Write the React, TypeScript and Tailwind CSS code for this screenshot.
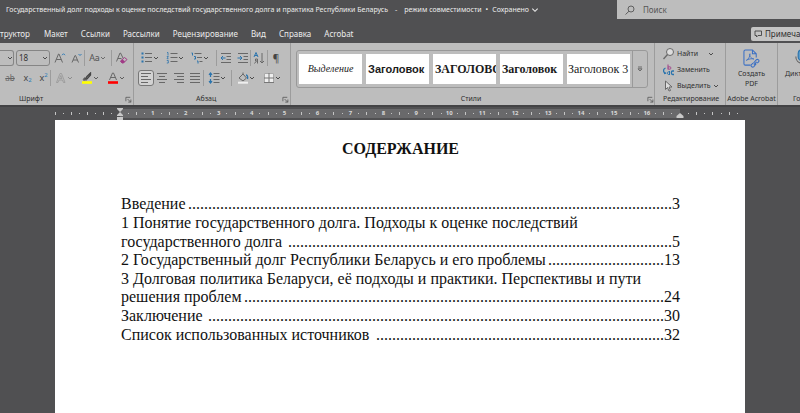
import React from 'react';
import clsx from 'clsx';

const tabs = [
  { label: 'структор', className: 'w-[30px] flex justify-end' },
  { label: 'Макет', className: 'ml-[14px]' },
  { label: 'Ссылки', className: 'ml-[13px]' },
  { label: 'Рассылки', className: 'ml-[13px]' },
  { label: 'Рецензирование', className: 'ml-[13px]' },
  { label: 'Вид', className: 'ml-[13px]' },
  { label: 'Справка', className: 'ml-[13px]' },
  { label: 'Acrobat', className: 'ml-[13px]' },
];

const styleCards = [
  { label: 'Выделение', className: 'justify-center px-[2px] font-["Liberation_Serif",serif] text-[10px] italic' },
  { label: 'Заголовок', className: 'px-[2px] font-["Liberation_Sans",sans-serif] text-[11px] font-bold' },
  { label: 'ЗАГОЛОВОК', className: 'px-[2px] font-["Liberation_Serif",serif] text-[12px] font-bold' },
  { label: 'Заголовок', className: 'px-[2px] font-["Liberation_Serif",serif] text-[12px] font-bold' },
  { label: 'Заголовок 3', className: 'px-px font-["Liberation_Serif",serif] text-[12px]' },
];

const contents = [
  { text: 'Введение', dots: 121, page: '3' },
  { text: '1 Понятие государственного долга. Подходы к оценке последствий' },
  { text: 'государственного долга ', dots: 96, page: '5' },
  { text: '2 Государственный долг Республики Беларусь и его проблемы', dots: 29, page: '13' },
  { text: '3 Долговая политика Беларуси, её подходы и практики. Перспективы и пути' },
  { text: 'решения проблем', dots: 105, page: '24' },
  { text: 'Заключение ', dots: 114, page: '30' },
  { text: 'Список использованных источников ', dots: 72, page: '32' },
];

const Chevron = ({ className }: { className?: string }) => (
  <svg viewBox="0 0 6 6" className={clsx('h-[6px] w-[6px] shrink-0', className)} fill="none" stroke="currentColor" strokeWidth="0.8">
    <path d="M1 2l2 2 2-2" />
  </svg>
);

const Sep = ({ className }: { className?: string }) => (
  <span className={clsx('h-[16px] w-px shrink-0 bg-[#9c9c9c]', className)} />
);

type ToolProps = { label: string; className?: string; children: React.ReactNode };

const Tool = ({ label, className, children }: ToolProps) => (
  <button type="button" aria-label={label} className={clsx('flex h-[16px] shrink-0 items-center justify-center', className)}>
    {children}
  </button>
);

const Icon = ({ children, className }: { children: React.ReactNode; className?: string }) => (
  <svg viewBox="0 0 12 12" className={clsx('h-[12px] w-[12px] shrink-0', className)} fill="none" stroke="#686868" strokeWidth="1">
    {children}
  </svg>
);

const Launcher = ({ label }: { label: string }) => (
  <button type="button" aria-label={label} className="flex h-[8px] w-[8px] shrink-0 items-center justify-center">
    <svg viewBox="0 0 8 8" className="h-[7px] w-[7px]" fill="none" stroke="#555" strokeWidth="0.9">
      <path d="M1 6V1.5h5M3 3.5l3.5 3.5M6.7 4v3h-3" />
    </svg>
  </button>
);

const FontGroup = () => (
  <section aria-label="Шрифт" className="flex w-[134px] shrink-0 flex-col border-r border-[#9c9c9c] pt-[6px]">
    <div className="flex h-[18px] items-center">
      <Tool label="Имя шрифта" className="w-[14px] rounded-r-[3px] border border-l-0 border-[#858585] pl-[6px]">
        <Chevron />
      </Tool>
      <div className="ml-[2px] flex h-[16px] w-[34px] items-center rounded-[3px] border border-[#858585] pr-px">
        <select aria-label="Размер шрифта" defaultValue="18" className="h-full w-[26px] appearance-none bg-transparent pl-[2px] text-[8px] leading-[14px] text-[#333] outline-none">
          <option>14</option>
          <option>16</option>
          <option>18</option>
        </select>
        <Chevron />
      </div>
      <Tool label="Увеличить размер" className="ml-[3px] w-[14px]">
        <Icon>
          <path d="M1 10.5L4.500 2h.5l3.500 8.5M2.200 7.500h5" />
          <path d="M8 3.200l1.500-1.500L11 3.200" stroke="#2f7cb8" />
        </Icon>
      </Tool>
      <Tool label="Уменьшить размер" className="ml-[3px] w-[13px]">
        <Icon>
          <path d="M1 10.500L4 3.500h.5l3 7M2 8h4.500" />
          <path d="M7.500 2L9 3.500 10.500 2" stroke="#2f7cb8" />
        </Icon>
      </Tool>
      <Sep className="ml-px" />
      <Tool label="Регистр" className="ml-[3px] w-[19px] justify-between text-[9px] text-[#555]">
        Аа
        <Chevron />
      </Tool>
      <Sep className="ml-[4px]" />
      <Tool label="Удалить форматирование" className="ml-[3px] w-[13px]">
        <Icon>
          <path d="M.5 9.500L4 1h.5L7 6M2 6.500h3.500" />
          <path d="M4.500 9l4-3.500 2.500 2-3.500 3.500H6z" stroke="#a03a86" />
          <path d="M4.500 9l2-1.700 2.500 2.200L7.500 11H6z" fill="#a03a86" stroke="none" />
        </Icon>
      </Tool>
    </div>
    <div className="mt-[2px] flex h-[18px] items-center text-[9px] text-[#444]">
      <Tool label="Зачеркнутый" className="ml-[4px] w-[12px] text-[8px] text-[#666] line-through">ab</Tool>
      <Tool label="Подстрочный" className="ml-[6px] w-[11px]">
        x<sub className="text-[6px] text-[#2f7cb8]">2</sub>
      </Tool>
      <Tool label="Надстрочный" className="ml-[5px] w-[11px]">
        x<sup className="text-[6px] text-[#2f7cb8]">2</sup>
      </Tool>
      <Sep className="ml-px" />
      <Tool label="Текстовые эффекты" className="ml-[3px] w-[20px] justify-between">
        <Icon className="opacity-50">
          <path d="M1.500 10.500L5 1.500h1.500l3.500 9H8.500L7.500 8H4l-1 2.500zM4.500 6.500h2.500L5.800 3.500z" strokeWidth="0.7" />
        </Icon>
        <Chevron className="opacity-50" />
      </Tool>
      <Tool label="Цвет выделения" className="ml-[6px] w-[20px] justify-between">
        <Icon>
          <path d="M9.500 1L6 4.500 4 7.500l2-.5L9.500 3z" stroke="#444" strokeWidth="1.3" />
          <path d="M3.500 5.500L2 8h4" fill="#555" />
          <path d="M1 10.500h10" stroke="#ffff00" strokeWidth="2.6" />
        </Icon>
        <Chevron />
      </Tool>
      <Tool label="Цвет текста" className="ml-[6px] w-[20px] justify-between">
        <Icon>
          <path d="M2.500 8L5.500 1h1l3 7M3.800 5.500h4.500" />
          <path d="M1 10.500h10" stroke="#ff0000" strokeWidth="2.6" />
        </Icon>
        <Chevron />
      </Tool>
    </div>
    <div className="mt-[7px] flex items-center justify-between pr-px pl-[19px]">
      Шрифт
      <Launcher label="Параметры шрифта" />
    </div>
  </section>
);

const ParagraphGroup = () => (
  <section aria-label="Абзац" className="flex w-[157px] shrink-0 flex-col border-r border-[#9c9c9c] pt-[6px]">
    <div className="flex h-[18px] items-center">
      <Tool label="Маркеры" className="ml-[6px] w-[20px] justify-between">
        <Icon>
          <path d="M4 1.500h7M4 5.500h7M4 9.500h7" />
          <path d="M.5 1.500h2M.5 5.500h2M.5 9.500h2" stroke="#2b74ad" strokeWidth="2" />
        </Icon>
        <Chevron />
      </Tool>
      <Tool label="Нумерация" className="ml-[5px] w-[20px] justify-between">
        <Icon>
          <path d="M4.500 1.500h7M4.500 5.500h7M4.500 9.500h7" />
          <path d="M1 .5h1v3M.8 4.500h1.500L1 6.700h1.500M.8 8.500h1.500V11H.8" stroke="#2b74ad" strokeWidth="0.8" />
        </Icon>
        <Chevron />
      </Tool>
      <Tool label="Многоуровневый список" className="ml-[5px] w-[20px] justify-between">
        <Icon>
          <path d="M3.500 1.500h7M6 5.500h5M8.500 9.500h3" />
          <path d="M.5 1h1v2.500M3 4.500h1.500V7H3M6 9h1v2.500" stroke="#2b74ad" />
        </Icon>
        <Chevron />
      </Tool>
      <Sep className="ml-[6px]" />
      <Tool label="Уменьшить отступ" className="ml-[3px] w-[12px]">
        <Icon>
          <path d="M1 1.500h10M6.500 4.500H11M6.500 7.500H11M1 10.500h10" />
          <path d="M5.500 6H1M3 4L1 6l2 2" stroke="#2b74ad" />
        </Icon>
      </Tool>
      <Tool label="Увеличить отступ" className="ml-[5px] w-[12px]">
        <Icon>
          <path d="M1 1.500h10M6.500 4.500H11M6.500 7.500H11M1 10.500h10" />
          <path d="M.5 6H5M3 4l2 2-2 2" stroke="#2b74ad" />
        </Icon>
      </Tool>
      <Sep className="ml-px" />
      <Tool label="Сортировка" className="ml-[2px] w-[12px]">
        <Icon>
          <path d="M1 5L3 .5 5 5M1.800 3.500h2.500" stroke="#2b74ad" />
          <path d="M4.500 11.500v-4.500H2.500v2h2M3 9.500l-1.500 2M9 1v10M7 9l2 2 2-2" />
        </Icon>
      </Tool>
      <Sep className="ml-[2px]" />
      <Tool label="Знаки абзаца" className="ml-[3px] w-[10px] text-[10px] text-[#444]">¶</Tool>
    </div>
    <div className="mt-[2px] flex h-[18px] items-center">
      <Tool label="По левому краю" className="ml-[4px] w-[16px] rounded-[3px] border border-[#777] bg-[#d2d2d2]">
        <Icon>
          <path d="M1 1.500h10M1 4.500h7M1 7.500h10M1 10.500h7" />
        </Icon>
      </Tool>
      <Tool label="По центру" className="ml-[2px] w-[12px]">
        <Icon>
          <path d="M1 1.500h10M3 4.500h6M1 7.500h10M3 10.500h6" />
        </Icon>
      </Tool>
      <Tool label="По правому краю" className="ml-[5px] w-[12px]">
        <Icon>
          <path d="M1 1.500h10M4 4.500h7M1 7.500h10M4 10.500h7" />
        </Icon>
      </Tool>
      <Tool label="По ширине" className="ml-[4px] w-[12px]">
        <Icon>
          <path d="M1 1.500h10M1 4.500h10M1 7.500h10M1 10.500h10" />
        </Icon>
      </Tool>
      <Sep className="ml-[2px]" />
      <Tool label="Интервал" className="ml-[3px] w-[20px] justify-between">
        <Icon>
          <path d="M5.500 1.500h6M5.500 4.500h6M5.500 7.500h6M5.500 10.500h6" />
          <path d="M2.500 1v4M1 2.800L2.500 1 4 2.800M2.500 7v4M1 9.200L2.500 11 4 9.200" stroke="#2b74ad" strokeWidth="1.2" />
        </Icon>
        <Chevron />
      </Tool>
      <Sep className="ml-[4px]" />
      <Tool label="Заливка" className="ml-[4px] w-[20px] justify-between">
        <Icon>
          <path d="M2 6l4-4 3.500 4-3.500 3zM6 2V.5" />
          <path d="M9 3c1.500 0 2 2 1.500 4" stroke="#2b74ad" strokeWidth="1.3" />
          <path d="M1 10.700h10" stroke="#eee" strokeWidth="2" />
        </Icon>
        <Chevron />
      </Tool>
      <Tool label="Границы" className="ml-[5px] w-[21px] justify-between">
        <Icon>
          <path d="M1.500 1.500h9v9h-9z" fill="#eee" stroke="#aaa" />
          <path d="M6 1v10M1 6h10M1 10.500h10" stroke="#777" />
        </Icon>
        <Chevron />
      </Tool>
    </div>
    <div className="mt-[7px] flex items-center justify-between pr-px pl-[62px]">
      Абзац
      <Launcher label="Параметры абзаца" />
    </div>
  </section>
);

const StylesGroup = () => (
  <section aria-label="Стили" className="flex min-w-0 flex-1 flex-col border-r border-[#9c9c9c] pt-[7px] pl-[5px]">
    <div className="mr-[6px] flex h-[38px] rounded-[3px] border border-[#999]">
      <div className="grid min-w-0 flex-1 grid-cols-5 gap-[4px] px-[2px] py-[3px]">
        {styleCards.map((card, i) => (
          <button
            key={i}
            type="button"
            className={clsx('flex items-center overflow-hidden bg-white whitespace-nowrap text-[#1b1b1b]', card.className)}
          >
            {card.label}
          </button>
        ))}
      </div>
      <button type="button" aria-label="Все стили" className="flex w-[15px] items-center justify-center border-l border-[#999]">
        <svg viewBox="0 0 6 6" className="h-[6px] w-[6px]" fill="none" stroke="#555" strokeWidth="0.8">
          <path d="M1 1h4M1 2.8h4L3 5z" />
        </svg>
      </button>
    </div>
    <div className="mt-[6px] flex items-center">
      <span className="flex-1 text-center">Стили</span>
      <Launcher label="Область стилей" />
    </div>
  </section>
);

const EditGroup = () => (
  <section aria-label="Редактирование" className="flex w-[71px] shrink-0 flex-col border-r border-[#9c9c9c] pt-[3px] pl-[8px]">
    <button type="button" className="flex h-[16px] items-center gap-[2px]">
      <Icon>
        <circle cx="7" cy="4" r="3.500" fill="#ddd" />
        <path d="M4.500 6.500L.5 11" strokeWidth="1.3" />
      </Icon>
      Найти
      <Chevron className="ml-[8px]" />
    </button>
    <button type="button" className="flex h-[16px] items-center gap-[2px]">
      <Icon>
        <path d="M5 .5v5M5 3.500c0-1 3-1 3 .5S5 5.500 5 4.500" stroke="#a03a86" />
        <path d="M2.500 4C0 5 0 8 2 9M1 9.500l2-.5M11 7H9.500C8 7 8 10.500 9.500 10.500H11" stroke="#2b74ad" strokeWidth="1.3" />
        <path d="M6.500 7v4M6.500 8c-3-1-3 3 0 2.500" stroke="#2b74ad" />
      </Icon>
      Заменить
    </button>
    <button type="button" className="flex h-[16px] items-center gap-[2px]">
      <Icon>
        <path d="M2.500 1v8.500l2-2L6 11l1.500-.5L6 7h3z" fill="#ddd" />
      </Icon>
      Выделить
      <Chevron />
    </button>
    <span>Редактирование</span>
  </section>
);

const AcrobatGroup = () => (
  <section aria-label="Adobe Acrobat" className="flex w-[52px] shrink-0 flex-col items-center border-r border-[#9c9c9c] pt-[6px] whitespace-nowrap">
    <button type="button" className="flex flex-col items-center">
      <svg viewBox="0 0 18 20" className="h-[19px] w-[17px]" fill="none" stroke="#3a6fc4" strokeWidth="1.1">
        <path d="M8 17H2.500Q1 17 1 15.500V2.500Q1 1 2.500 1H10l4 4v4M10 1v4h4" />
        <path d="M3.500 12c2-1 4-4 4-7-1.500 0 0 5 4 5.500-2-.7-6 0-8 1.500z" strokeWidth="0.9" />
        <path d="M11 15l3-3.500c1.500-1.500 4 .5 2.500 2L15 15M14 15.500l-2.500 3c-1.500 1.500-4-.5-2.500-2l1.500-1.500M11.500 16.500l3-3" />
      </svg>
      <span className="mt-px leading-[10px]">Создать</span>
      <span className="leading-[10px]">PDF</span>
    </button>
    <span className="mt-[5px]">Adobe Acrobat</span>
  </section>
);

const VoiceGroup = () => (
  <section aria-label="Голос" className="flex w-[22px] shrink-0 flex-col overflow-hidden pt-[6px] whitespace-nowrap">
    <button type="button" className="flex flex-col pl-[7px]">
      <svg viewBox="0 0 16 20" className="ml-[9px] h-[19px] w-[16px] shrink-0" fill="none" stroke="#666" strokeWidth="1.2">
        <rect x="4" y="1" width="7" height="11" rx="3.5" fill="#5b9bc9" stroke="#2b74ad" />
        <path d="M1.500 8c0 9 12 9 12 0M7.500 15v4" />
      </svg>
      <span className="mt-px leading-[10px]">Диктофон</span>
    </button>
    <span className="mt-[15px] pl-[15px]">Голос</span>
  </section>
);

const Tick = ({ index, numbered }: { index: number; numbered?: boolean }) => (
  <span className="flex h-full min-w-0 flex-1 items-center justify-center">
    {numbered && index % 4 === 0 ? (
      <span>{index / 4}</span>
    ) : (
      <span className={clsx('w-px bg-[#c4c4c4]', index % 2 ? 'h-px' : 'h-[3px]')} />
    )}
  </span>
);

const Ruler = () => (
  <div className="flex h-[15px] shrink-0 items-center justify-center border-t-2 border-[#434345]">
    <div className="flex h-[9px] w-full max-w-[698px] text-[6px] leading-[9px] font-bold text-[#d8d8d8]">
      <div className="flex w-[69px] pr-[4px]">
        {Array.from({ length: 8 }, (_, i) => <Tick key={i} index={i} />)}
      </div>
      <div className="relative flex min-w-0 flex-1 bg-[#69696b] px-[4px]">
        {Array.from({ length: 67 }, (_, i) => <Tick key={i} index={i + 1} numbered />)}
        <svg viewBox="0 0 8 14" className="absolute -top-[2px] -left-[4px] h-[14px] w-[8px]" fill="#c8c8c8">
          <path d="M1 1h6v1L4 5 1 2zM4 5l3 3v1H1V8zM1 10h6v3H1z" />
        </svg>
        <svg viewBox="0 0 8 5" className="absolute top-[4px] -right-[4px] h-[5px] w-[8px]" fill="#c8c8c8">
          <path d="M4 0l3.500 3v2h-7V3z" />
        </svg>
      </div>
      <div className="flex w-[69px] pr-[7px] pl-[4px]">
        {Array.from({ length: 7 }, (_, i) => <Tick key={i} index={i + 1} />)}
      </div>
    </div>
  </div>
);

export default function App() {
  return (
    <div className="flex min-h-screen flex-col overflow-hidden bg-[#505052] font-['Noto_Sans',sans-serif]">
      <header className="flex h-[19px] shrink-0 items-center text-[7px] text-[#ececec]">
        <h1 className="flex gap-[7px] pt-px pl-[6px] whitespace-nowrap">
          <span>Государственный долг подходы к оценке последствий государственного долга и практика Республики Беларусь</span>
          <span>-</span>
          <span>режим совместимости</span>
          <span className="-mx-[3px]">•</span>
          <span>Сохранено</span>
        </h1>
        <Chevron className="ml-[2px] h-[8px] w-[8px]" />
        <label className="ml-auto flex h-full w-[183px] shrink-0 items-center bg-[#bdbdbd] pl-[8px]">
          <svg viewBox="0 0 10 10" className="h-[10px] w-[10px]" fill="none" stroke="#555" strokeWidth="0.9">
            <circle cx="6" cy="4" r="3" />
            <path d="M4 6.200L.5 9.500" />
          </svg>
          <input type="search" aria-label="Поиск" placeholder="Поиск" className="ml-[8px] min-w-0 flex-1 bg-transparent text-[8px] outline-none placeholder:text-[#555]" />
        </label>
      </header>

      <nav className="flex h-[24px] shrink-0 items-center pt-[6px] text-[8px] whitespace-nowrap text-[#ececec]">
        {tabs.map((tab) => (
          <button key={tab.label} type="button" className={tab.className}>{tab.label}</button>
        ))}
        <button type="button" className="mb-px ml-auto flex h-[14px] w-[49px] items-center gap-[3px] overflow-hidden rounded-l-[2px] bg-[#c4c4c4] pl-[3px] text-[#2f2f2f]">
          <svg viewBox="0 0 8 8" className="h-[8px] w-[8px] shrink-0" fill="none" stroke="#444" strokeWidth="0.9">
            <path d="M1 1h6.500v4.500H4L2.500 7V5.500H1z" />
          </svg>
          Примечания
        </button>
      </nav>

      <div className="flex h-[62px] shrink-0 bg-[#bdbdbd] text-[7px] leading-[10px] text-[#2f2f2f]">
        <FontGroup />
        <ParagraphGroup />
        <StylesGroup />
        <EditGroup />
        <AcrobatGroup />
        <VoiceGroup />
      </div>

      <Ruler />

      <main className="mx-auto w-full max-w-[690px] flex-1 bg-white pt-[19px] pr-[65px] pl-[66px] font-['Liberation_Serif',serif] text-[16px] text-[#111]">
        <h2 className="text-center leading-[20px] font-bold">СОДЕРЖАНИЕ</h2>
        <ol className="mt-[36px] grid h-[149px] auto-rows-fr grid-cols-1">
          {contents.map((line) => (
            <li key={line.text} className="flex items-center leading-[18px] whitespace-pre">
              <span>{line.text}</span>
              {line.page && (
                <>
                  <span aria-hidden="true" className="h-[18px] min-w-0 flex-1 overflow-hidden text-right break-all whitespace-normal">
                    {'.'.repeat(line.dots)}
                  </span>
                  <span>{line.page}</span>
                </>
              )}
            </li>
          ))}
        </ol>
      </main>
    </div>
  );
}
